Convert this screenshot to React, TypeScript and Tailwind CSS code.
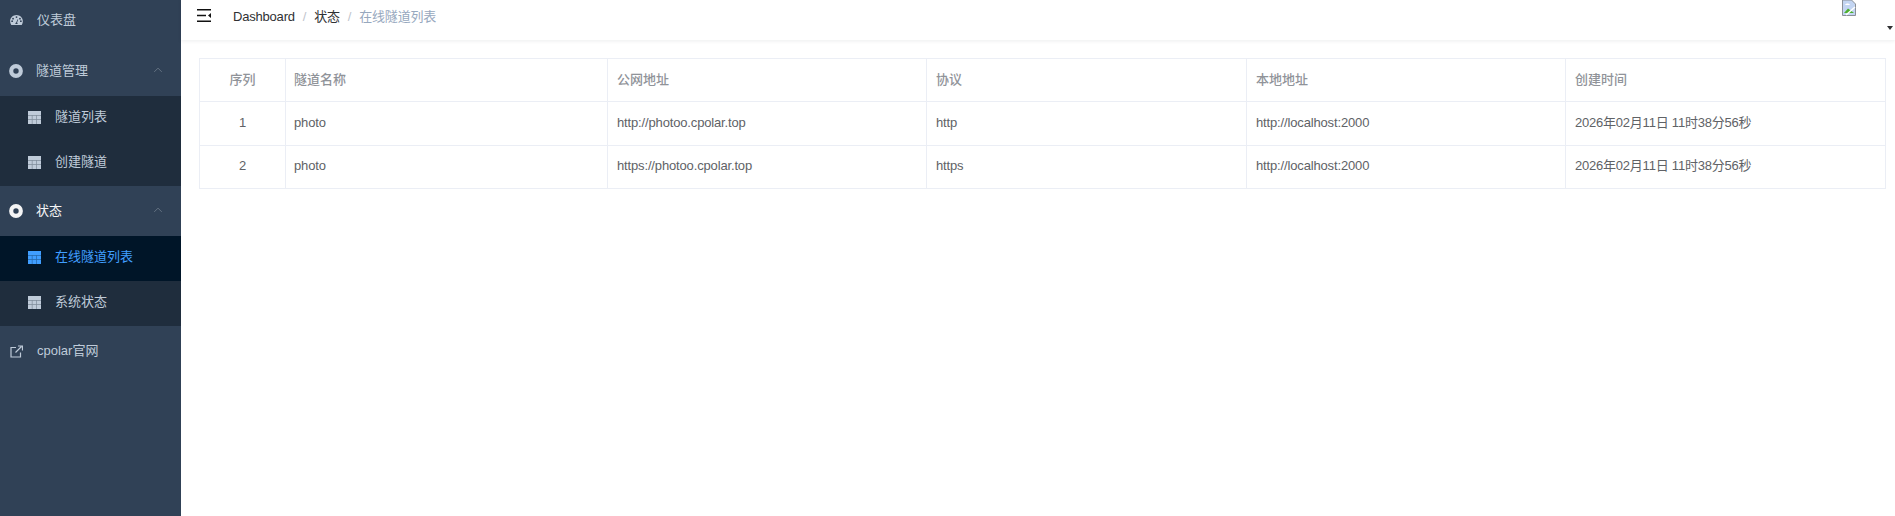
const fontStack = "font-['Liberation_Sans','Noto_Sans_CJK_SC',sans-serif]"

const GaugeIcon = ({ className }: { className?: string }) => (
  <svg viewBox="0 0 14 11" className={className} fill="currentColor">
    <path d="M7 0C3.200 0 0 3.100 0 6.900c0 1.400.4 2.700 1.100 3.800.1.200.3.300.5.300h10.800c.2 0 .4-.1.500-.3.700-1.100 1.100-2.400 1.100-3.800C14 3.100 10.800 0 7 0zM7 1.300a1 1 0 1 1 0 2 1 1 0 0 1 0-2zM3.200 3a1 1 0 1 1 0 2 1 1 0 0 1 0-2zM2.200 7.800a1 1 0 1 1 0-2 1 1 0 0 1 0 2zM10.800 3a1 1 0 1 1 0 2 1 1 0 0 1 0-2zM11.800 7.800a1 1 0 1 1 0-2 1 1 0 0 1 0 2zM8.300 9.800H5.700c0-.8.400-1.300 1-1.500L8.200 4.600l.7.300-1.300 3.500c.4.300.7.800.7 1.400z" fillRule="evenodd" />
  </svg>
)

const RingIcon = ({ className }: { className?: string }) => (
  <svg viewBox="0 0 14 14" className={className}>
    <circle cx="7" cy="7" r="4.800" fill="none" stroke="currentColor" strokeWidth="4.200" />
  </svg>
)

const TableIcon = ({ className }: { className?: string }) => (
  <svg viewBox="0 0 13 13" className={className} fill="currentColor">
    <path d="M0 0h13v13H0z" opacity="0.6" />
    <path d="M0 0h13v4H0zM0 4.700h3.800v3.600H0zM4.500 4.700h3.800v3.600H4.500zM9 4.700h4v3.600H9zM0 9h3.800v4H0zM4.500 9h3.800v4H4.500zM9 9h4v4H9z" />
  </svg>
)

const LinkIcon = ({ className }: { className?: string }) => (
  <svg viewBox="0 0 13 13" className={className} fill="none" stroke="currentColor" strokeWidth="1.200">
    <path d="M6 2.500H1v9.500h9.500V7.500" />
    <path d="M5.500 7.500 11.500 1.500M8 1h4.500v4.500" />
  </svg>
)

const Chevron = () => (
  <svg viewBox="0 0 12 8" className="mb-[2px] ml-auto mr-[18px] h-[6px] w-[10px] text-[#6f7c8c]" fill="none" stroke="currentColor" strokeWidth="1.100">
    <path d="M1 6.500 6 1.500l5 5" />
  </svg>
)

const SubItem = ({ label, active }: { label: string; active?: boolean }) => (
  <div className={`flex h-[45px] items-center pl-[28px] ${active ? "bg-[#001528] text-[#409eff]" : "bg-[#1f2d3d] text-[#bfcbd9]"}`}>
    <TableIcon className="mb-[2px] mr-[14px] size-[13px]" />
    <span className="pb-[3px]">{label}</span>
  </div>
)

const columns = ["隧道名称", "公网地址", "协议", "本地地址", "创建时间"]
const widths = ["w-[322px]", "w-[319px]", "w-[320px]", "w-[319px]", "w-[320px]"]

const rows = [
  ["1", "photo", "http://photoo.cpolar.top", "http", "http://localhost:2000", "2026年02月11日 11时38分56秒"],
  ["2", "photo", "https://photoo.cpolar.top", "https", "http://localhost:2000", "2026年02月11日 11时38分56秒"],
]

const App = () => {
  return (
    <div className={`flex h-[516px] w-full overflow-hidden bg-white ${fontStack}`}>
      <aside className="w-[181px] shrink-0 overflow-hidden bg-[#304156] text-[13px] text-[#bfcbd9]">
        <div className="-mt-[5px] flex h-[51px] items-center pb-[2px] pl-[10px]">
          <GaugeIcon className="mr-[14px] h-[10px] w-[13px]" />
          仪表盘
        </div>
        <div className="flex h-[50px] items-center pl-[9px]">
          <RingIcon className="mb-[1px] mr-[13px] size-[14px]" />
          <span className="pb-[1px]">隧道管理</span>
          <Chevron />
        </div>
        <SubItem label="隧道列表" />
        <SubItem label="创建隧道" />
        <div className="flex h-[50px] items-center pl-[9px] text-[#f4f4f5]">
          <RingIcon className="mb-[1px] mr-[13px] size-[14px]" />
          <span className="pb-[1px]">状态</span>
          <Chevron />
        </div>
        <SubItem label="在线隧道列表" active />
        <SubItem label="系统状态" />
        <div className="flex h-[50px] items-center pl-[10px]">
          <LinkIcon className="mr-[14px] size-[13px]" />
          cpolar官网
        </div>
      </aside>

      <main className="relative min-w-0 flex-1">
        <header className="flex h-[40px] items-center pb-[8px] pl-[16px] shadow-[0_1px_4px_rgba(0,21,41,0.08)]">
          <svg viewBox="0 0 14 13" className="mb-[1px] mr-[22px] h-[13px] w-[14px]" fill="#111">
            <path d="M0 0h14v1.600H0zM0 5.700h9v1.600H0zM0 11.400h14v1.600H0zM14 4v5l-3-2.500z" />
          </svg>
          <nav className="mt-[2px] flex items-center text-[13px] tracking-[-0.2px]">
            <span className="text-[#303133]">Dashboard</span>
            <span className="mx-[8px] text-[#c0c4cc]">/</span>
            <span className="text-[#303133]">状态</span>
            <span className="mx-[8px] text-[#c0c4cc]">/</span>
            <span className="text-[#97a8be]">在线隧道列表</span>
          </nav>
        </header>

        {/* broken avatar image and dropdown caret */}
        <svg viewBox="0 0 14 16" className="absolute right-[39px] top-0 h-[16px] w-[14px]">
          <path d="M.5 0h9l4 4v11.500H.5z" fill="#c3d5f2" stroke="#8a8f96" />
          <path d="M2 13 6 8.500l2 1.500 4 3z" fill="#4caf2f" />
          <path d="M3 5c1-2 4-2 5 0z" fill="#fff" />
          <path d="M4 15 13 7" stroke="#fff" strokeWidth="1.500" />
        </svg>
        <span className="absolute right-[2px] top-[26px] size-0 border-x-[3px] border-t-[4px] border-x-transparent border-t-[#303133]" />

        <div className="pl-[18px] pr-[10px] pt-[18px]">
          <table className="w-[1686px] table-fixed border-collapse border border-[#ebeef5] text-[13px] text-[#606266]">
            <thead>
              <tr className="h-[43px] text-[#909399]">
                <th className="w-[86px] border border-[#ebeef5] text-center font-medium">序列</th>
                {columns.map((col, i) => (
                  <th key={col} className={`${widths[i]} border border-[#ebeef5] text-left font-medium ${i === 0 ? "pl-[8px]" : "pl-[9px]"}`}>{col}</th>
                ))}
              </tr>
            </thead>
            <tbody>
              {rows.map((row, rowIndex) => (
                <tr key={row[0]} className={rowIndex === 0 ? "h-[44px]" : "h-[43px]"}>
                  {row.map((cell, i) => (
                    <td key={i} className={`border border-[#ebeef5] pb-[2px] ${i === 5 ? "tracking-[-0.22px]" : "tracking-[-0.15px]"} ${i === 0 ? "text-center" : i === 1 ? "pl-[8px]" : "pl-[9px]"}`}>{cell}</td>
                  ))}
                </tr>
              ))}
            </tbody>
          </table>
        </div>
      </main>
    </div>
  )
}

export default App
